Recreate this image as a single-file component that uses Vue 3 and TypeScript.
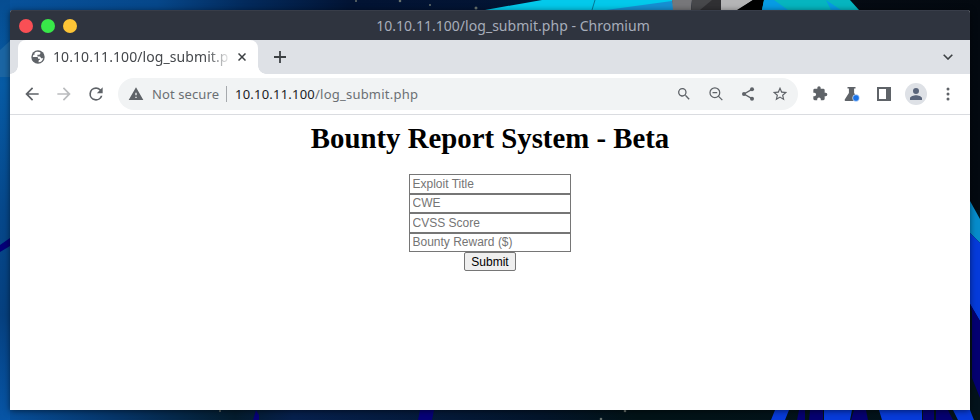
<script setup lang="ts">
import { ref } from 'vue'

interface Field {
  name: string
  label: string
}

const host = '10.10.11.100'
const path = '/log_submit.php'
const fields: Field[] = [
  { name: 'exploitTitle', label: 'Exploit Title' },
  { name: 'cwe', label: 'CWE' },
  { name: 'cvss', label: 'CVSS Score' },
  { name: 'reward', label: 'Bounty Reward ($)' },
]
const values = ref<Record<string, string>>({})
</script>

<template>
  <div class="desktop">
    <svg class="wallpaper" viewBox="0 0 980 420" aria-hidden="true">
      <defs>
        <linearGradient id="top" x1="0" x2="1" y1="0" y2="0">
          <stop offset="0" stop-color="#07529c" />
          <stop offset=".16" stop-color="#06478a" />
          <stop offset=".25" stop-color="#032a5c" />
          <stop offset=".36" stop-color="#021333" />
          <stop offset=".56" stop-color="#031534" />
          <stop offset=".8" stop-color="#060b14" />
          <stop offset="1" stop-color="#030910" />
        </linearGradient>
        <linearGradient id="bottom" x1="0" x2="1" y1="0" y2="0">
          <stop offset="0" stop-color="#07509d" />
          <stop offset=".12" stop-color="#063568" />
          <stop offset=".24" stop-color="#041c2d" />
          <stop offset=".3" stop-color="#06204d" />
          <stop offset=".55" stop-color="#03152b" />
          <stop offset=".65" stop-color="#021317" />
          <stop offset="1" stop-color="#03131c" />
        </linearGradient>
        <linearGradient id="left" x1="0" x2="0" y1="0" y2="1">
          <stop offset="0" stop-color="#064d91" />
          <stop offset=".2" stop-color="#075ba5" />
          <stop offset=".5" stop-color="#06488b" />
          <stop offset=".75" stop-color="#06407f" />
          <stop offset="1" stop-color="#0755a6" />
        </linearGradient>
      </defs>
      <rect width="980" height="210" fill="url(#top)" />
      <rect y="210" width="980" height="210" fill="url(#bottom)" />
      <rect width="10" height="420" fill="url(#left)" />
      <path d="M0 50l10-9v36H0z" fill="#1b65a3" />
      <path d="M0 245l10-7v8l-10 6z" fill="#050078" />
      <path d="M485 10L542 0H672L674 10z" fill="#03c9eb" />
      <path d="M606 10L672 1l2 9z" fill="#168fd2" />
      <path d="M595 0l-3 10" stroke="#067896" />
      <path d="M672 0h20l-1 10h-18z" fill="#77777a" />
      <path d="M692 0h29v10h-30z" fill="#47484b" />
      <path d="M712 0h9v10h-21z" fill="#303033" />
      <path d="M721 0h32l-15 10h-17z" fill="#b5b5b6" />
      <path d="M753 0h11l-2 10h-25z" fill="#000" />
      <path d="M764 0h86l9 10h-97z" fill="#06b5bf" />
      <path d="M764 0h10l14 10h-26zM826 0l15 10h-10z" fill="#079be4" />
      <g fill="#68726e">
        <circle cx="356" cy="1" r="1" /><circle cx="400" cy="1" r="1.3" />
        <circle cx="430" cy="5" r="1" /><circle cx="476" cy="8" r="1.5" />
        <circle cx="220" cy="411" r="1" /><circle cx="625" cy="411" r="1.3" />
        <circle cx="601" cy="419" r="1.3" />
      </g>
      <path d="M970 201l10 18v24l-10-10z" fill="#068ccb" />
      <path d="M970 233l10 10v78l-10-17z" fill="#053bdb" />
      <path d="M970 304l10 17v77l-10-25z" fill="#040071" />
      <path d="M970 304l2 8v83l-2-4z" fill="#041117" />
      <path d="M256 410l3 5v5h-6zM420 410h14l-2 10h-14z" fill="#060078" />
      <path d="M775 410h14l-4 10h-14zM824 410h28l-2 10h-26zM879 410h43v10h-40zM953 410h17l4 10h-16z" fill="#073bd9" />
      <path d="M799 410h6v10h-8zM810 410h13v10h-14zM854 410h12l2 10h-17zM923 410h11v10h-11zM936 410h12l5 10h-17z" fill="#050071" />
    </svg>

    <main class="window">
      <header class="titlebar">
        <div class="controls"><i class="red" /><i class="green" /><i class="yellow" /></div>
        <span class="window-title">{{ host }}{{ path }} - Chromium</span>
      </header>

      <nav class="tabstrip">
        <div class="tab">
          <svg class="globe" viewBox="0 0 24 24">
            <circle cx="12" cy="12" r="11.5" fill="#5f6368" />
            <path d="M3 12h7c2 0 2 1 2 3h3v2c-1 0-2 0-2 2v2c4 0 7-3 8-7h-4c0-2-1-3-3-3h-3V8h3c1 0 2-1 2-2V4c-4-2-8-1-10 1v3H4z" fill="#fff" />
          </svg>
          <span class="tab-title">{{ host }}{{ path }}</span>
          <svg class="close" viewBox="0 0 8 8"><path d="M.5.5l7 7m0-7l-7 7" /></svg>
        </div>
        <svg class="plus" viewBox="0 0 12 12"><path d="M6 0v12M0 6h12" /></svg>
        <svg class="chevron" viewBox="0 0 10 6"><path d="M.7.7L5 5 9.300.7" /></svg>
      </nav>

      <div class="toolbar">
        <div class="navigation">
          <svg viewBox="0 0 24 24"><path d="M20 11H7.830l5.590-5.590L12 4l-8 8 8 8 1.410-1.410L7.830 13H20z" /></svg>
          <svg class="disabled" viewBox="0 0 24 24"><path d="M4 11h12.170l-5.580-5.590L12 4l8 8-8 8-1.410-1.410L16.170 13H4z" /></svg>
          <svg viewBox="0 0 24 24"><path d="M17.650 6.350A7.958 7.958 0 0 0 12 4a8 8 0 1 0 7.730 10h-2.080A6 6 0 1 1 12 6c1.660 0 3.140.69 4.220 1.780L13 11h7V4z" /></svg>
        </div>
        <div class="address">
          <svg class="warning" viewBox="0 0 24 24"><path d="M1 21h22L12 2zm12-3h-2v-2h2zm0-4h-2v-4h2z" /></svg>
          <span class="insecure">Not secure</span>
          <span class="separator" />
          <span class="url"><b>{{ host }}</b>{{ path }}</span>
          <div class="address-actions">
            <svg viewBox="0 0 24 24"><path d="M15.500 14h-.79l-.28-.27A6.500 6.500 0 1 0 13.730 14.430l.27.28v.79l5 4.990L20.490 19zm-6 0a4.500 4.500 0 1 1 0-9 4.500 4.500 0 0 1 0 9z" /></svg>
            <svg viewBox="0 0 24 24"><g fill="none" stroke="#5f6368" stroke-width="1.900"><circle cx="10.300" cy="10" r="7.300" /><path d="M15.500 15.200l6 6M6.800 10h7" /></g></svg>
            <svg viewBox="0 0 24 24"><path d="M18 5L6 12l12 7" fill="none" stroke="#5f6368" stroke-width="2" /><circle cx="18" cy="5" r="3" /><circle cx="6" cy="12" r="3" /><circle cx="18" cy="19" r="3" /></svg>
            <svg viewBox="1 1 22 22"><path d="M22 9.240l-7.190-.62L12 2 9.190 8.630 2 9.240l5.460 4.730L5.820 21 12 17.270 18.180 21l-1.630-7.030zM12 15.400l-3.760 2.270 1-4.280-3.320-2.880 4.380-.38L12 6.100l1.710 4.040 4.380.38-3.320 2.880 1 4.280z" /></svg>
          </div>
        </div>
        <div class="extensions">
          <svg viewBox="0 0 24 24"><path d="M20.500 11H19V7a2 2 0 0 0-2-2h-4V3.500a2.500 2.500 0 0 0-5 0V5H4a2 2 0 0 0-2 2v3.800h1.500a2.700 2.700 0 0 1 0 5.400H2V20a2 2 0 0 0 2 2h3.800v-1.500a2.700 2.700 0 0 1 5.400 0V22H17a2 2 0 0 0 2-2v-4h1.500a2.500 2.500 0 0 0 0-5z" transform="translate(0 -.7)" /></svg>
          <svg viewBox="0 0 16 16"><path d="M3.500 1h8v1.500h-1.400V7l4 6v2H1.500c-1 0-1-1-.6-1.700L4.900 7V2.500H3.500z" /><circle cx="12" cy="12" r="3.400" fill="#1a73e8" stroke="#fff" stroke-width=".6" /></svg>
          <svg viewBox="0 0 16 16"><path fill-rule="evenodd" d="M1 1h14v14H1zm2 2v10h7V3z" /></svg>
          <span class="avatar"><svg viewBox="0 0 24 24"><path d="M12 12a4.500 4.500 0 1 0 0-9 4.500 4.500 0 0 0 0 9zM12 14c-3 0-9 1.500-9 4.500V21h18v-2.500c0-3-6-4.500-9-4.500z" /></svg></span>
          <svg viewBox="0 0 16 16"><circle cx="8" cy="3" r="1.500" /><circle cx="8" cy="8" r="1.500" /><circle cx="8" cy="13" r="1.500" /></svg>
        </div>
      </div>

      <section class="page">
        <h1>Bounty Report System - Beta</h1>
        <form @submit.prevent>
          <input v-for="field in fields" :key="field.name" v-model="values[field.name]" :placeholder="field.label" :aria-label="field.label">
          <button type="submit">Submit</button>
        </form>
      </section>
    </main>
  </div>
</template>

<style>
body { margin: 0; overflow: hidden; }
</style>

<style scoped>
* { box-sizing: border-box; }
svg { display: block; flex: none; fill: #5f6368; }
.desktop { position: relative; width: 980px; height: 420px; padding: 10px; overflow: hidden; font-family: "Noto Sans", sans-serif; }
.wallpaper { position: absolute; inset: 0; width: 980px; height: 420px; }
.window { position: relative; height: 400px; display: flex; flex-direction: column; overflow: hidden; border-radius: 3px 3px 0 0; background: #fff; box-shadow: 0 1px 6px #0008; }
.titlebar { flex: none; display: grid; grid-template-columns: 90px 1fr 44px; height: 30px; align-items: center; background: #2f343f; border-top: 1px solid #383d49; }
.controls { display: flex; gap: 8px; padding-left: 9px; }
.controls i { width: 14px; height: 14px; border-radius: 50%; }
.red { background: #f94f55; }
.green { background: #38e849; }
.yellow { background: #fcc436; }
.window-title { text-align: center; color: #a7adba; font-size: 14px; line-height: 28px; letter-spacing: .03px; white-space: nowrap; }
.tabstrip { flex: none; height: 34px; display: flex; align-items: center; padding: 0 17px 0 8px; background: #dee1e6; }
.tab { position: relative; width: 240px; height: 34px; display: flex; align-items: center; padding: 0 12px 0 13px; border-radius: 8px 8px 0 0; background: #fff; }
.tab::before, .tab::after { content: ""; position: absolute; bottom: 0; width: 8px; height: 8px; }
.tab::before { left: -8px; background: radial-gradient(circle at 0 0, transparent 7.500px, #fff 8px); }
.tab::after { right: -8px; background: radial-gradient(circle at 100% 0, transparent 7.500px, #fff 8px); }
.globe { width: 14px; height: 14px; }
.tab-title { width: 176px; margin-left: 8px; overflow: hidden; white-space: nowrap; color: #45484c; font-size: 14px; line-height: 32px; letter-spacing: .08px; mask-image: linear-gradient(90deg, #000 154px, transparent 178px); }
.close { width: 8px; height: 8px; margin-left: 9px; fill: none; stroke: #3c4043; stroke-width: 1.500; }
.plus { width: 12px; height: 12px; margin-left: 16px; fill: none; stroke: #3c4043; stroke-width: 1.800; }
.chevron { width: 10px; height: 6px; margin-left: auto; fill: none; stroke: #3c4043; stroke-width: 1.600; }
.toolbar { flex: none; height: 41px; display: flex; align-items: center; padding: 0 13px 0 12px; border-bottom: 1px solid #dadce0; background: #fff; }
.navigation { display: flex; gap: 12px; }
.navigation svg { width: 20px; height: 20px; }
.navigation .disabled { fill: #babcbe; }
.address { width: 680px; height: 32px; display: flex; align-items: center; margin-left: 12px; padding: 0 10px; border-radius: 16px; background: #f1f3f4; color: #6b6f73; font-size: 13px; line-height: 30px; white-space: nowrap; }
.warning { width: 16px; height: 16px; }
.insecure { width: 67px; margin-left: 8px; letter-spacing: .1px; }
.separator { width: 1px; height: 16px; margin: 0 8px 0 7px; background: #a6a9ad; }
.url { letter-spacing: .22px; }
.url b { color: #202124; font-weight: 400; }
.address-actions { display: flex; gap: 16px; margin-left: auto; }
.address-actions svg { width: 16px; height: 16px; }
.extensions { flex: 1; display: flex; align-items: center; gap: 16px; padding-left: 14px; }
.extensions > svg { width: 16px; height: 16px; }
.avatar { width: 22px; height: 22px; display: grid; place-items: center; margin: 0 -2px 0 -3px; border-radius: 50%; background: #dee1e6; }
.extensions > svg:last-child { margin-left: -1px; }
.avatar svg { width: 16px; height: 16px; fill: #59647a; }
.page { padding-top: 7px; text-align: center; }
h1 { margin: 0; color: #000; font: bold 28.800px/33px "Liberation Serif", serif; }
form { display: flex; flex-direction: column; align-items: center; margin-top: 19px; }
input { width: 162px; height: 19.500px; padding: 1px 2px 1px 2.500px; border: 1px solid #767676; border-radius: 0; outline: 0; background: #fff; color: #000; font: 12px "Liberation Sans", sans-serif; }
input::placeholder { color: #757575; opacity: 1; }
button { width: 52px; height: 19px; padding: 0; border: 1px solid #767676; border-radius: 2px; background: #efefef; color: #000; font: 12px "Liberation Sans", sans-serif; }
</style>
